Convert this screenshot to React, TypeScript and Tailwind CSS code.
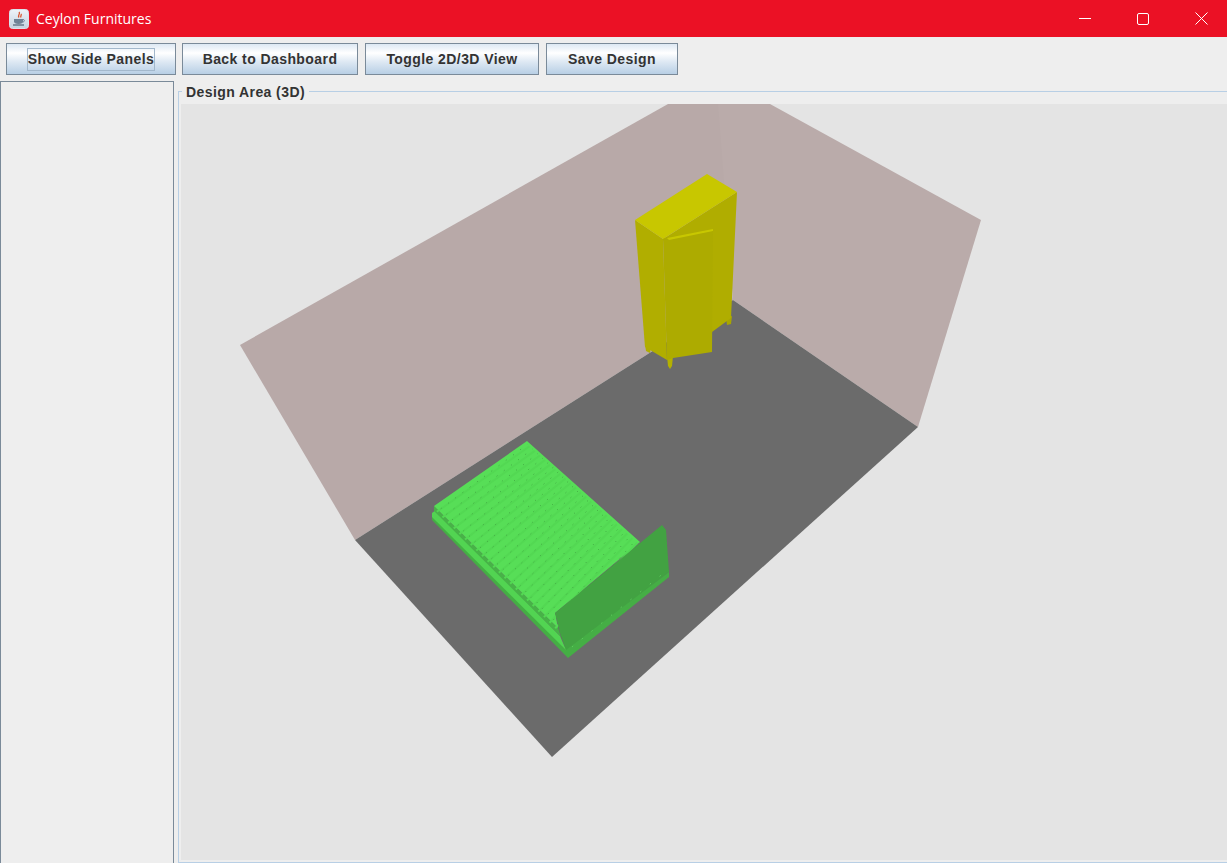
import React from 'react';

const TOOLBAR_BUTTONS = [
  { label: 'Show Side Panels', width: 'w-[170px]', margin: '', focused: true },
  { label: 'Back to Dashboard', width: 'w-[176px]', margin: 'ml-[6px]', focused: false },
  { label: 'Toggle 2D/3D View', width: 'w-[174px]', margin: 'ml-[7px]', focused: false },
  { label: 'Save Design', width: 'w-[132px]', margin: 'ml-[7px]', focused: false },
];

// mattress quilting: lines run parallel to the pillow edge of the bed
const STRIPE_COUNT = 22;

const JavaIcon = () => (
  <svg width="20" height="20" viewBox="0 0 20 20">
    <defs>
      <linearGradient id="ic" x1="0" y1="0" x2="0" y2="1">
        <stop offset="0" stopColor="#eef3f8" />
        <stop offset="1" stopColor="#c4d2e0" />
      </linearGradient>
    </defs>
    <rect x="0.5" y="0.5" width="19" height="19" rx="3" fill="url(#ic)" stroke="#d9e2ea" />
    <path d="M10 3c2 2-2 3 0 5.5M12 5c1 1-1 2 0 3.5" stroke="#d9532c" strokeWidth="1.3" fill="none" />
    <path d="M5 10h9v2.5c0 1.6-1.5 2.5-4.5 2.5S5 14.1 5 12.5z" fill="#6f8296" />
    <path d="M14 10.5c2 0 2 2.5-.5 2.5" stroke="#6f8296" fill="none" />
    <path d="M4 16h11" stroke="#4f6274" strokeWidth="1.2" />
  </svg>
);

const WindowControls = () => (
  <div className="flex h-full items-center gap-[46px] pr-[19px]">
    <svg width="12" height="12" viewBox="0 0 12 12">
      <path d="M0 5.5h12" stroke="#fff" />
    </svg>
    <svg width="12" height="12" viewBox="0 0 12 12">
      <rect x="0.5" y="0.5" width="11" height="11" rx="1.5" fill="none" stroke="#fff" />
    </svg>
    <svg width="13" height="13" viewBox="0 0 13 13">
      <path d="M0.5 0.5l12 12M12.5 0.5l-12 12" stroke="#fff" />
    </svg>
  </div>
);

const Wardrobe = () => (
  <g>
    <polygon points="645,344 651,347 650,353 646,351" fill="#b0ad00" />
    <polygon points="667,356 673,356 672,366 670,369 668,366" fill="#b4b100" />
    <polygon points="726,318 732,316 731,324 727,325" fill="#a8a600" />
    <polygon points="663,239 737,192 731,318 712,332 712,352" fill="#b0ad00" />
    <polygon points="635,220 663,239 667,360 650,350 645,347" fill="#b1ae00" />
    <polygon points="663,238 713,230 712,352 673,358 667,360" fill="#adab00" />
    <polygon points="635,220 707,174 737,192 663,239" fill="#c8c700" />
    <polygon points="667,238 713,229 713,231 669,240" fill="#c8c700" />
  </g>
);

const Bed = () => {
  const stripes = Array.from({ length: STRIPE_COUNT }, (_, i) => {
    const t = (i + 0.5) / STRIPE_COUNT;
    return {
      x1: 434 + (558 - 434) * t,
      y1: 506 + (628 - 506) * t,
      x2: 527 + (640 - 527) * t,
      y2: 441 + (542 - 441) * t,
    };
  });
  return (
    <g>
      <polygon points="432,515 566,648 669,572 669,577 568,658 432,520" fill="#45ae45" />
      <polygon points="432,513 436,510 560,636 566,650 432,517" fill="#52d452" />
      <polygon points="434,506 558,628 561,637 434,511" fill="#47b247" />
      <polygon points="434,506 527,441 640,542 555,613 558,628" fill="#57de57" />
      {stripes.map((s, i) => (
        <g key={i}>
          <line x1={s.x1} y1={s.y1 + 3} x2={s.x2} y2={s.y2 + 3} stroke="#53d853" strokeWidth="2" />
          <line x1={s.x1 + 4} y1={s.y1} x2={s.x2 - 2} y2={s.y2 + 1} stroke="#3fa03f" strokeWidth="0.9" strokeDasharray="1 8" />
        </g>
      ))}
      <polygon points="555,613 662,525 666,530 669,572 566,650 560,633" fill="#42a242" />
      <line x1="572" y1="647" x2="665" y2="572" stroke="#5ccc5c" strokeWidth="1" strokeDasharray="1.5 11" />
    </g>
  );
};

const RoomScene = () => (
  <svg className="block h-full w-full" viewBox="181 104 1046 756" preserveAspectRatio="xMinYMin slice">
    <rect x="181" y="104" width="1046" height="756" fill="#e4e4e4" />
    <polygon points="716,104 770,104 981,220 918,427 733,300" fill="#baabaa" />
    <polygon points="240,345 668,104 718,104 733,300 355,540" fill="#b8a9a8" />
    <polygon points="355,540 733,300 918,427 552,757" fill="#6b6b6b" />
    <Wardrobe />
    <Bed />
  </svg>
);

const App: React.FC = () => {
  return (
    <div className="flex h-screen w-full flex-col overflow-hidden bg-[#eeeeee] font-['Liberation_Sans',Arial,sans-serif]">
      <div className="flex h-[37px] shrink-0 items-center justify-between bg-[#eb1125]">
        <div className="flex items-center pl-[9px]">
          <JavaIcon />
          <span className="ml-[7px] font-['Open_Sans',sans-serif] text-[14px] text-white">Ceylon Furnitures</span>
        </div>
        <WindowControls />
      </div>

      <div className="flex h-[44px] shrink-0 items-start px-[6px] pt-[6px]">
        {TOOLBAR_BUTTONS.map((btn) => (
          <button
            key={btn.label}
            className={`flex h-[32px] ${btn.width} ${btn.margin} items-center justify-center border border-[#7a8a99] bg-[linear-gradient(180deg,#dde8f3_0%,#ffffff_30%,#dde8f3_60%,#b8cfe5_100%)] pt-px text-[14px] font-bold tracking-[0.42px] text-[#333333]`}
          >
            {btn.focused ? <span className="border border-[#a3b8cc] px-0 py-[1px] leading-[19px]">{btn.label}</span> : btn.label}
          </button>
        ))}
      </div>

      <div className="flex min-h-0 flex-1">
        <div className="w-[174px] shrink-0 border-x border-t border-[#7a8a99] bg-[#eeeeee]" />
        <div className="relative min-w-0 flex-1 pl-[4px] pt-[10px]">
          <span className="absolute left-[8px] top-[3px] bg-[#eeeeee] px-[4px] text-[14px] leading-[16px] font-bold tracking-[0.42px] text-[#333333]">
            Design Area (3D)
          </span>
          <div className="h-full border-y border-l border-[#b8cfe5] pb-[2px] pl-[2px] pt-[12px]">
            <RoomScene />
          </div>
        </div>
      </div>
    </div>
  );
};

export default App;
